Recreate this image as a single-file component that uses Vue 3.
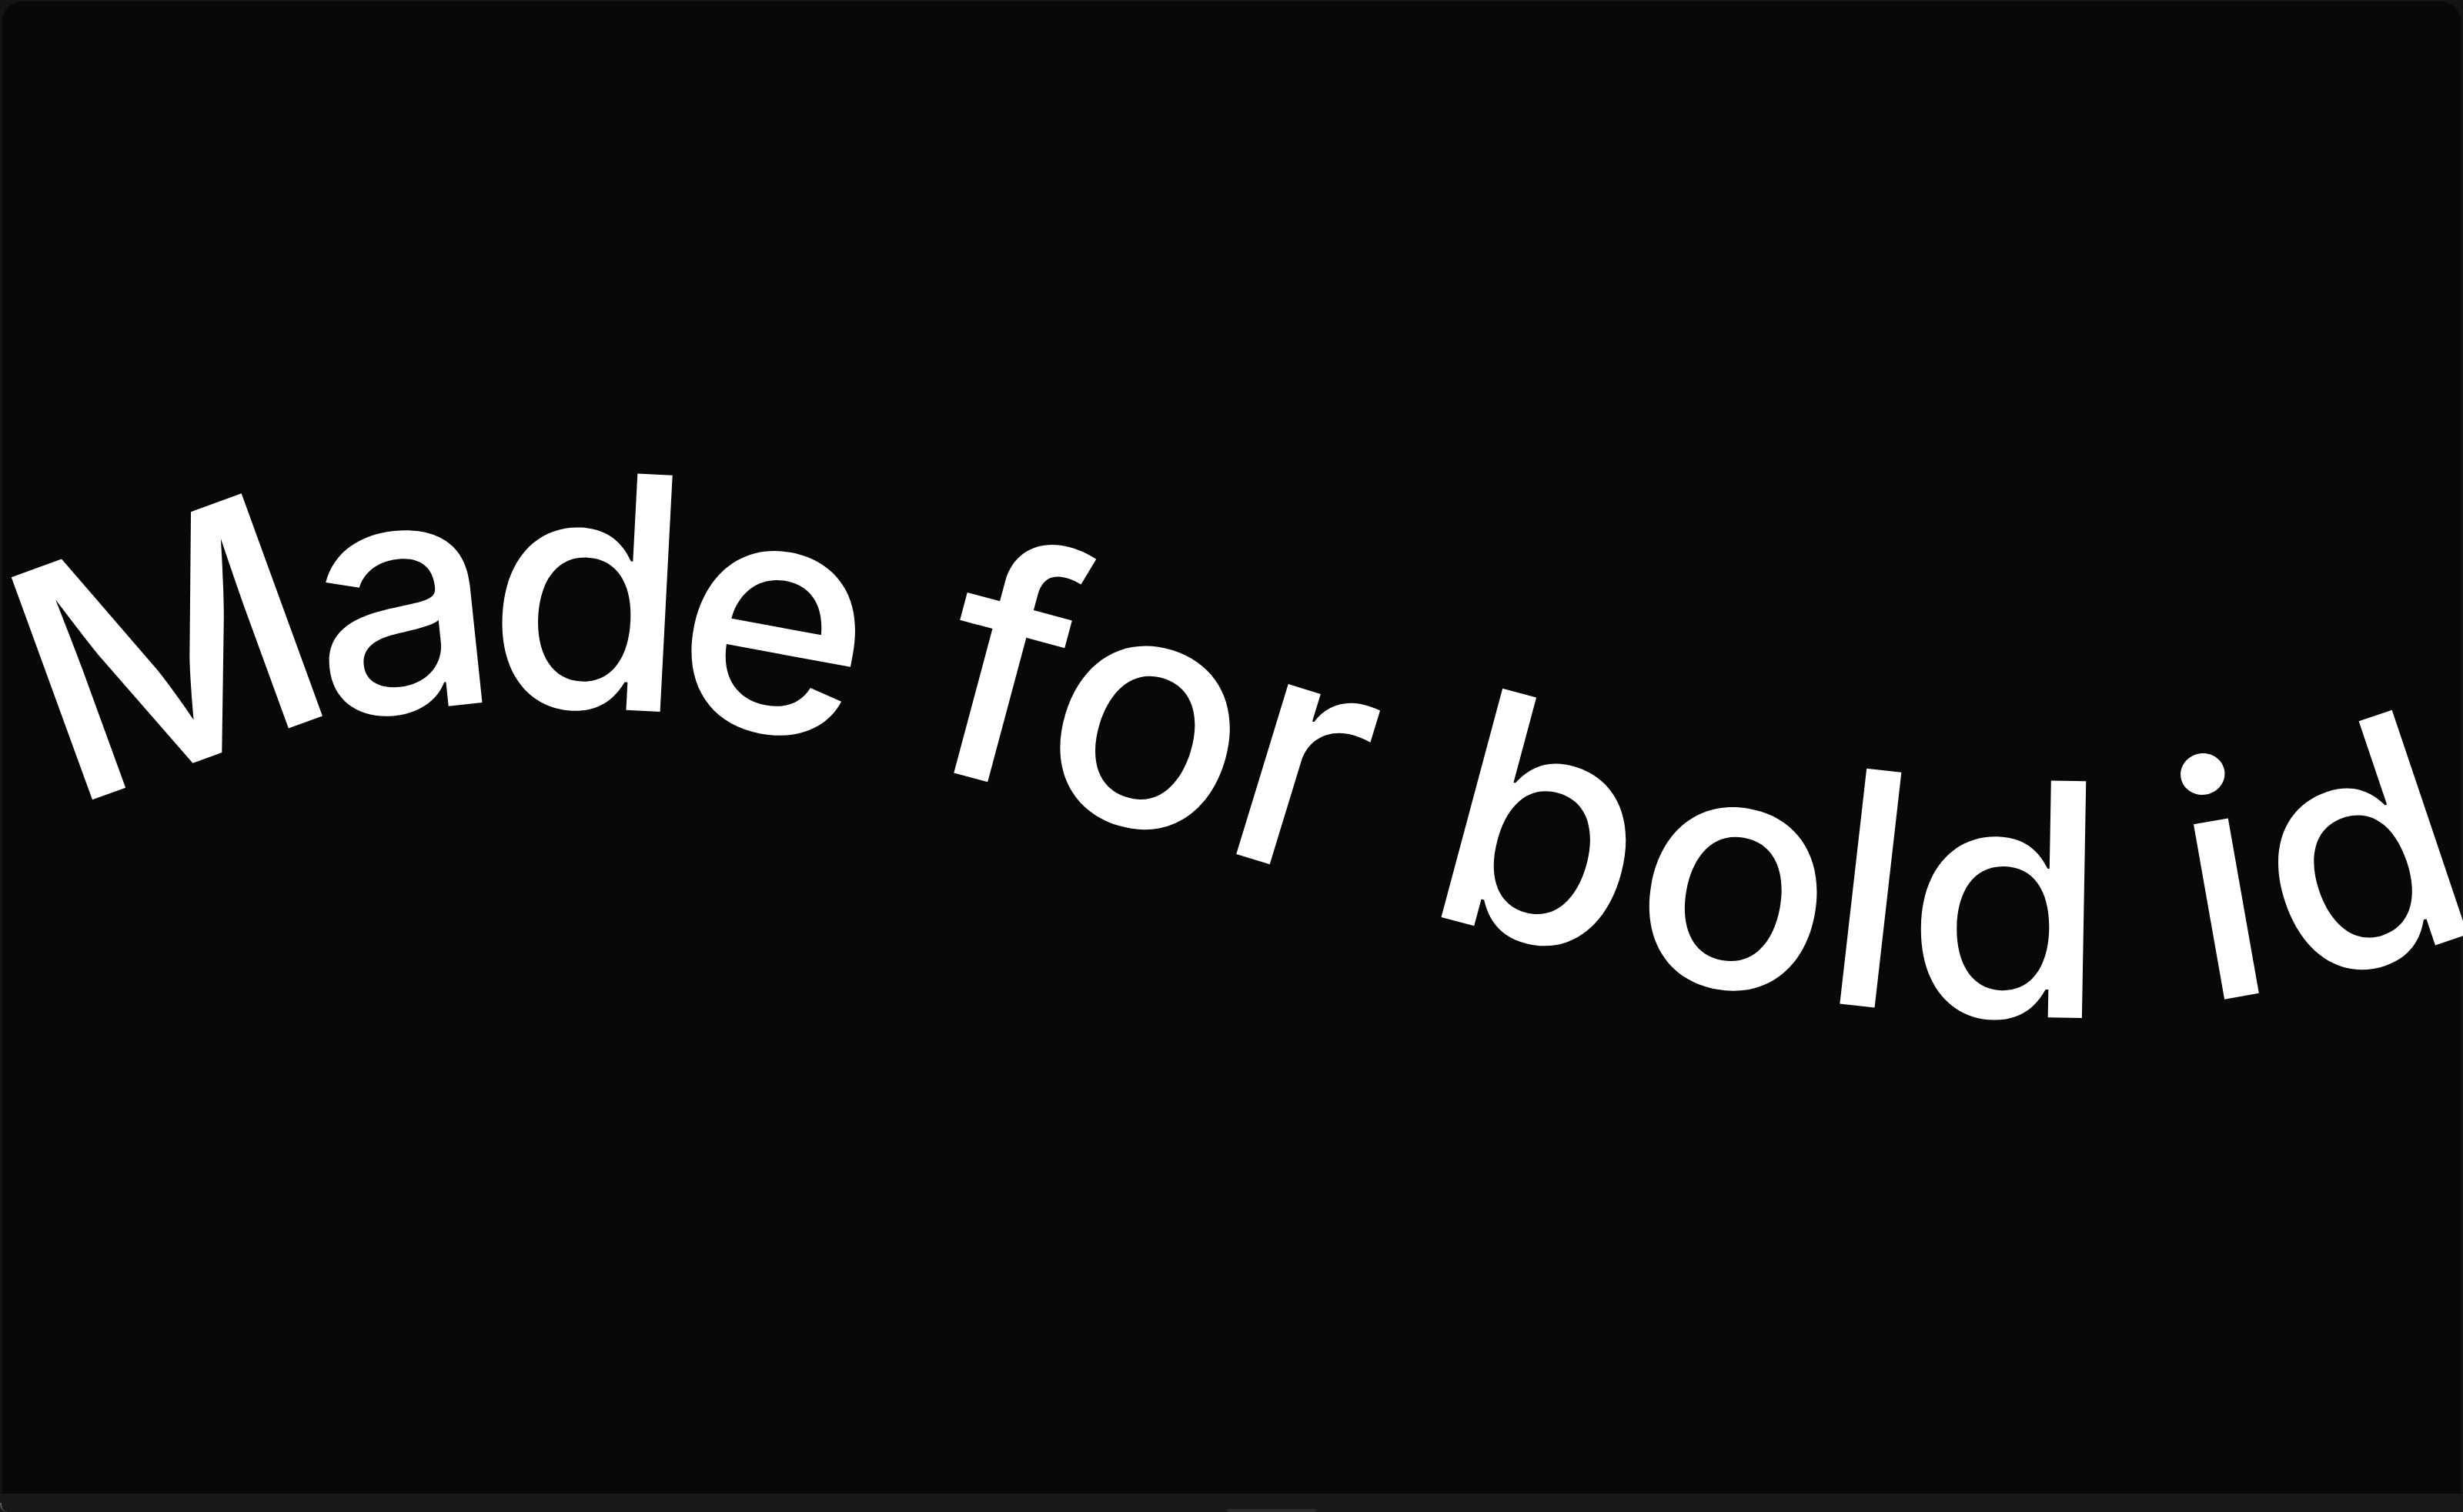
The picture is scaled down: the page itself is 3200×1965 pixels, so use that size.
<script setup>
// one glyph per entry: baseline origin and rotation along the wave
const glyphs = [
  { c: 'M', x: 88, y: 1051, r: -20 },
  { c: 'a', x: 418, y: 935, r: -6 },
  { c: 'd', x: 627, y: 913, r: 3 },
  { c: 'e', x: 861, y: 925, r: 10.5 },
  { c: ' ', x: 1150, y: 970, r: 13 },
  { c: 'f', x: 1193, y: 992, r: 15 },
  { c: 'o', x: 1332, y: 1031, r: 17 },
  { c: 'r', x: 1577, y: 1101, r: 17 },
  { c: ' ', x: 1760, y: 1150, r: 16 },
  { c: 'b', x: 1843, y: 1184, r: 15 },
  { c: 'o', x: 2106, y: 1259, r: 10 },
  { c: 'l', x: 2360, y: 1301, r: 6.5 },
  { c: 'd', x: 2474, y: 1319, r: 1 },
  { c: ' ', x: 2760, y: 1310, r: -5 },
  { c: 'i', x: 2860, y: 1304, r: -10 },
  { c: 'd', x: 2987, y: 1288, r: -18.6 },
]

const text = glyphs.map((g) => g.c).join('')
const xs = glyphs.map((g) => g.x).join(' ')
const ys = glyphs.map((g) => g.y).join(' ')
const rs = glyphs.map((g) => g.r).join(' ')
</script>

<template>
  <div class="frame">
    <main class="stage">
      <svg class="wave" viewBox="3 2 3194 1939" preserveAspectRatio="none">
        <text class="wave-text" :x="xs" :y="ys" :rotate="rs">{{ text }}</text>
      </svg>
    </main>
    <footer class="bar">
      <span class="handle"></span>
    </footer>
  </div>
</template>

<style>
html,
body {
  margin: 0;
  background: #141414;
}
</style>

<style scoped>
.frame {
  width: 3200px;
  height: 1965px;
  box-sizing: border-box;
  padding: 2px 3px 0;
  display: flex;
  flex-direction: column;
  background: #141414;
  overflow: hidden;
}

.stage {
  flex: 1;
  min-height: 0;
  background: #080808;
  border-radius: 26px 26px 0 0;
}

.wave {
  display: block;
  width: 100%;
  height: 100%;
  overflow: visible;
}

.wave-text {
  font-family: Inter, "Liberation Sans", sans-serif;
  font-size: 423px;
  font-weight: 500;
  fill: #ffffff;
  white-space: pre;
  text-rendering: geometricPrecision;
}

.bar {
  position: relative;
  height: 24px;
  margin: 0 -3px;
  display: flex;
  justify-content: center;
  align-items: flex-end;
  background: #181818;
}

/* corner of the window behind, just peeking in */
.bar::before {
  content: "";
  position: absolute;
  left: 0;
  bottom: 0;
  width: 8px;
  height: 12px;
  border-left: 2px solid #5c5c5c;
  border-bottom-left-radius: 12px;
}

.handle {
  width: 116px;
  height: 4px;
  margin-left: 104px;
  border-radius: 3px 3px 0 0;
  background: #2d2d2d;
}
</style>
